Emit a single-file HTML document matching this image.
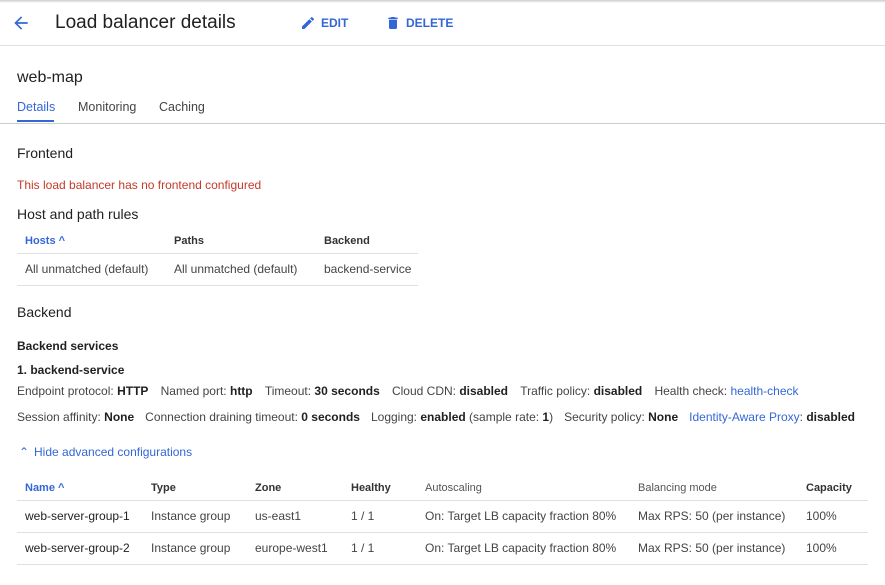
<!DOCTYPE html>
<html><head><style>
*{margin:0;padding:0;box-sizing:border-box}
body{width:885px;height:585px;background:#fff;font-family:"Liberation Sans",sans-serif;color:#212121;position:relative;overflow:hidden}
.a{position:absolute;white-space:nowrap}
.s{font-size:12px}
.g{color:#444}
b{font-weight:bold;color:#212121}
.blue{color:#3367d6}
.line{position:absolute;height:1px;background:#e0e0e0}
.th{font-size:11px;font-weight:bold;color:#333}
.td{font-size:12px;color:#444}
i{display:inline-block;font-style:normal}
.g1 i{width:12.2px}
.g2 i{width:11px}
</style></head><body>
<div style="position:absolute;left:0;top:0;width:885px;height:3px;background:linear-gradient(#ccc,#fff)"></div>
<svg class="a" style="left:11px;top:13px" width="20" height="20" viewBox="0 0 24 24"><path d="M20 11H7.8l5.6-5.6L12 4l-8 8 8 8 1.4-1.4L7.8 13H20z" fill="#3367d6"/></svg>
<div class="a" style="left:55px;top:12px;font-size:19px;color:#212121">Load balancer details</div>
<svg class="a" style="left:300px;top:15px" width="16" height="16" viewBox="0 0 24 24"><path d="M3 17.25V21h3.75L17.8 9.94l-3.75-3.75L3 17.25zM20.7 7.04a1 1 0 000-1.41l-2.34-2.34a1 1 0 00-1.41 0l-1.830 1.83 3.75 3.75 1.83-1.83z" fill="#3367d6"/></svg>
<div class="a blue" style="left:321px;top:16px;font-size:12px;font-weight:bold">EDIT</div>
<svg class="a" style="left:385px;top:14px" width="16" height="18" viewBox="0 0 24 24"><path d="M6 19c0 1.1.9 2 2 2h8c1.1 0 2-.9 2-2V7H6v12zM19 4h-3.5l-1-1h-5l-1 1H5v2h14V4z" fill="#3367d6"/></svg>
<div class="a blue" style="left:406px;top:16px;font-size:12px;font-weight:bold">DELETE</div>
<div class="line" style="left:0;top:45px;width:885px"></div>
<div class="a" style="left:17px;top:69px;font-size:16px">web-map</div>
<div class="a blue" style="left:17px;top:100px;font-size:12.5px">Details</div>
<div class="a g" style="left:78px;top:100px;font-size:12.5px">Monitoring</div>
<div class="a g" style="left:159px;top:100px;font-size:12.5px">Caching</div>
<div style="position:absolute;left:17px;top:120px;width:37px;height:2px;background:#3367d6"></div>
<div class="line" style="left:0;top:123px;width:885px;background:#ccc"></div>
<div class="a" style="left:17px;top:145px;font-size:14px">Frontend</div>
<div class="a s" style="left:17px;top:178px;color:#c53929">This load balancer has no frontend configured</div>
<div class="a" style="left:17px;top:206px;font-size:14px">Host and path rules</div>
<div class="a th blue" style="left:25px;top:235px;color:#3367d6">Hosts ^</div>
<div class="a th" style="left:174px;top:235px">Paths</div>
<div class="a th" style="left:324px;top:235px">Backend</div>
<div class="line" style="left:17px;top:253px;width:401px"></div>
<div class="a td" style="left:25px;top:262px">All unmatched (default)</div>
<div class="a td" style="left:174px;top:262px">All unmatched (default)</div>
<div class="a td" style="left:324px;top:262px">backend-service</div>
<div class="line" style="left:17px;top:285px;width:401px"></div>
<div class="a" style="left:17px;top:304px;font-size:14px">Backend</div>
<div class="a s" style="left:17px;top:339px;font-weight:bold">Backend services</div>
<div class="a s" style="left:17px;top:363px;font-weight:bold">1. backend-service</div>
<div class="a s g g1" style="left:17px;top:384px">Endpoint protocol: <b>HTTP</b><i></i>Named port: <b>http</b><i></i>Timeout: <b>30 seconds</b><i></i>Cloud CDN: <b>disabled</b><i></i>Traffic policy: <b>disabled</b><i></i>Health check: <span class="blue">health-check</span></div>
<div class="a s g g2" style="left:17px;top:410px">Session affinity: <b>None</b><i></i>Connection draining timeout: <b>0 seconds</b><i></i>Logging: <b>enabled</b> (sample rate: <b>1</b>)<i></i>Security policy: <b>None</b><i></i><span class="blue">Identity-Aware Proxy</span>: <b>disabled</b></div>
<div class="a s blue" style="left:19px;top:445px">⌃</div>
<div class="a s blue" style="left:34px;top:445px">Hide advanced configurations</div>
<div class="a th" style="left:25px;top:482px;color:#3367d6">Name ^</div>
<div class="a th" style="left:151px;top:482px">Type</div>
<div class="a th" style="left:255px;top:482px">Zone</div>
<div class="a th" style="left:351px;top:482px">Healthy</div>
<div class="a th" style="left:425px;top:482px;font-weight:normal;color:#555">Autoscaling</div>
<div class="a th" style="left:638px;top:482px;font-weight:normal;color:#555">Balancing mode</div>
<div class="a th" style="left:806px;top:482px">Capacity</div>
<div class="line" style="left:17px;top:500px;width:851px"></div>
<div class="a td" style="left:25px;top:509px;color:#212121">web-server-group-1</div>
<div class="a td" style="left:151px;top:509px">Instance group</div>
<div class="a td" style="left:255px;top:509px">us-east1</div>
<div class="a td" style="left:351px;top:509px">1 / 1</div>
<div class="a td" style="left:425px;top:509px">On: Target LB capacity fraction 80%</div>
<div class="a td" style="left:638px;top:509px">Max RPS: 50 (per instance)</div>
<div class="a td" style="left:806px;top:509px">100%</div>
<div class="line" style="left:17px;top:532px;width:851px"></div>
<div class="a td" style="left:25px;top:541px;color:#212121">web-server-group-2</div>
<div class="a td" style="left:151px;top:541px">Instance group</div>
<div class="a td" style="left:255px;top:541px">europe-west1</div>
<div class="a td" style="left:351px;top:541px">1 / 1</div>
<div class="a td" style="left:425px;top:541px">On: Target LB capacity fraction 80%</div>
<div class="a td" style="left:638px;top:541px">Max RPS: 50 (per instance)</div>
<div class="a td" style="left:806px;top:541px">100%</div>
<div class="line" style="left:17px;top:564px;width:851px"></div>
</body></html>
